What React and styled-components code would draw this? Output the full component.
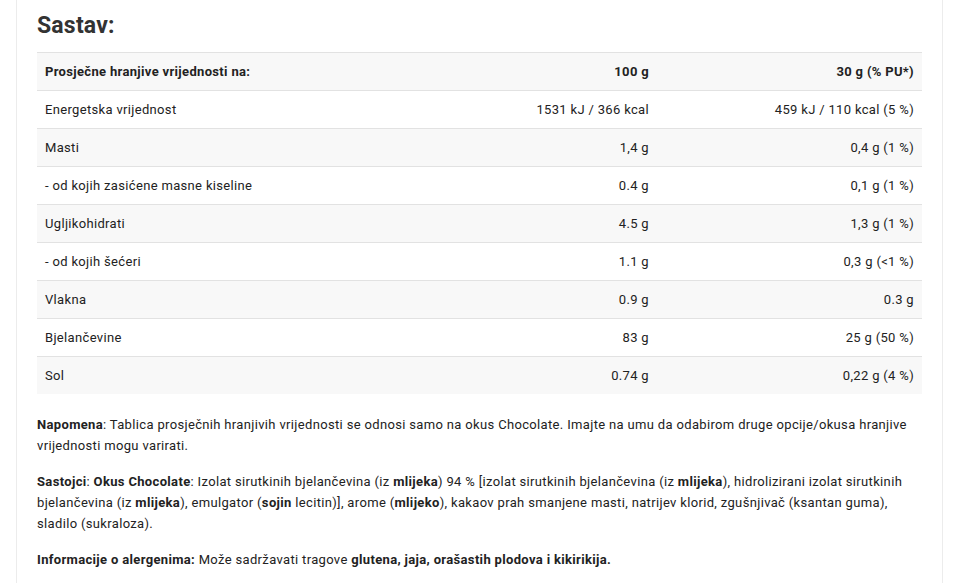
import React from 'react';
import styled, { createGlobalStyle } from 'styled-components';

const GlobalStyle = createGlobalStyle`
  body {
    margin: 0;
    background: #fff;
    font-family: Roboto, "Open Sans", Arial, sans-serif;
    color: #222;
  }
`;

const rows = [
  ['Energetska vrijednost', '1531 kJ / 366 kcal', '459 kJ / 110 kcal (5 %)'],
  ['Masti', '1,4 g', '0,4 g (1 %)'],
  ['- od kojih zasićene masne kiseline', '0.4 g', '0,1 g (1 %)'],
  ['Ugljikohidrati', '4.5 g', '1,3 g (1 %)'],
  ['- od kojih šećeri', '1.1 g', '0,3 g (<1 %)'],
  ['Vlakna', '0.9 g', '0.3 g'],
  ['Bjelančevine', '83 g', '25 g (50 %)'],
  ['Sol', '0.74 g', '0,22 g (4 %)'],
];

export default function App() {
  return (
    <>
      <GlobalStyle />
      <Page>
        <Panel>
          <Title>Sastav:</Title>
          <Table>
            <colgroup>
              <col />
              <col style={{ width: 300 }} />
              <col style={{ width: 265 }} />
            </colgroup>
            <tbody>
              <Row $striped>
                <Cell $bold>Prosječne hranjive vrijednosti na:</Cell>
                <Cell $bold $num>100 g</Cell>
                <Cell $bold $num>30 g (% PU*)</Cell>
              </Row>
              {rows.map((r, i) => (
                <Row key={r[0]} $striped={i % 2 === 1}>
                  <Cell>{r[0]}</Cell>
                  <Cell $num>{r[1]}</Cell>
                  <Cell $num>{r[2]}</Cell>
                </Row>
              ))}
            </tbody>
          </Table>
          <Text>
            <b>Napomena</b>: Tablica prosječnih hranjivih vrijednosti se odnosi samo na okus Chocolate. Imajte na umu da odabirom druge opcije/okusa hranjive vrijednosti mogu varirati.
          </Text>
          <Text>
            <b>Sastojci</b>: <b>Okus Chocolate</b>: Izolat sirutkinih bjelančevina (iz <b>mlijeka</b>) 94 % [izolat sirutkinih bjelančevina (iz <b>mlijeka</b>), hidrolizirani izolat sirutkinih bjelančevina (iz <b>mlijeka</b>), emulgator (<b>sojin</b> lecitin)], arome (<b>mlijeko</b>), kakaov prah smanjene masti, natrijev klorid, zgušnjivač (ksantan guma), sladilo (sukraloza).
          </Text>
          <Text>
            <b>Informacije o alergenima:</b> Može sadržavati tragove <b>glutena, jaja, orašastih plodova i kikirikija.</b>
          </Text>
        </Panel>
      </Page>
    </>
  );
}

const Page = styled.div`
  padding: 0 15px 0 16px;
`;

const Panel = styled.div`
  border-left: 1px solid #ececec;
  border-right: 1px solid #ececec;
  padding: 12px 20px 0 20px;
  min-height: 583px;
  box-sizing: border-box;
`;

const Title = styled.h2`
  margin: 0 0 13px;
  font-size: 23px;
  font-weight: 700;
  color: #333;
  line-height: 27px;
  letter-spacing: 0.2px;
`;

const Table = styled.table`
  width: 100%;
  border-collapse: collapse;
  table-layout: fixed;
  margin-bottom: 20px;
  border-top: 1px solid #e2e2e2;
`;

const Row = styled.tr`
  background: ${p => (p.$striped ? '#f8f8f8' : '#fff')};
  border-bottom: 1px solid #e2e2e2;
  &:last-child {
    border-bottom: none;
  }
`;

const Cell = styled.td`
  height: 37px;
  padding: 0 8px;
  font-size: 13px;
  letter-spacing: 0.33px;
  font-weight: ${p => (p.$bold ? 700 : 400)};
  text-align: ${p => (p.$num ? 'right' : 'left')};
  color: #222;
  white-space: nowrap;
`;

const Text = styled.p`
  margin: 0 0 15px;
  font-size: 13px;
  letter-spacing: 0.34px;
  line-height: 21px;
  color: #222;
  b {
    font-weight: 700;
  }
`;
